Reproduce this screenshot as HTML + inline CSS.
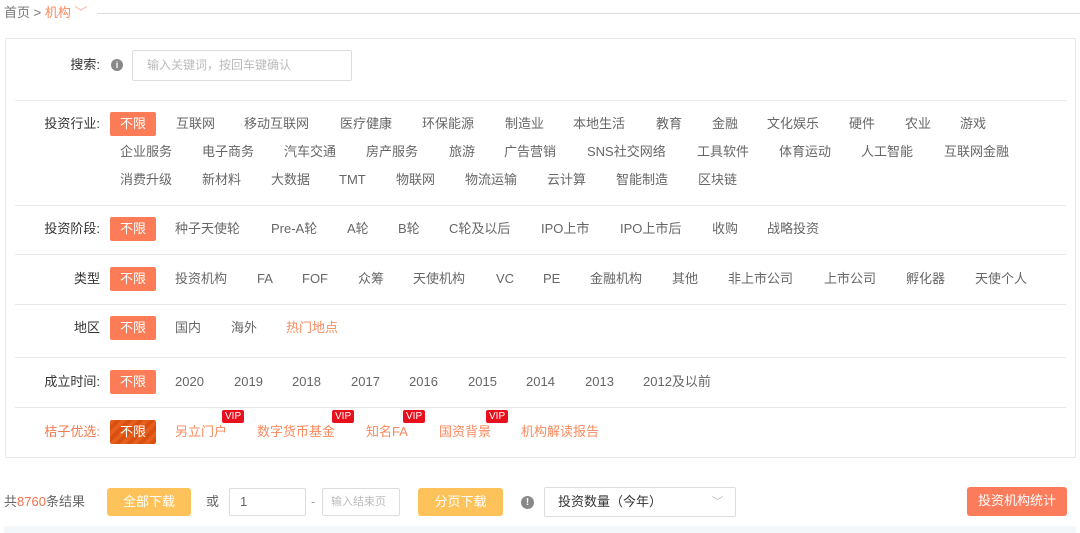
<!DOCTYPE html><html><head><meta charset="utf-8"><style>
*{margin:0;padding:0;box-sizing:border-box}
body{width:1080px;height:533px;background:#fff;font-family:"Liberation Sans","Noto Sans CJK SC",sans-serif;font-size:13px;color:#666;position:relative;overflow:hidden}
.a{position:absolute;white-space:nowrap;line-height:18px}
.panel{position:absolute;left:5px;top:38px;width:1071px;height:420px;border:1px solid #e6e6e6;border-radius:2px}
.hr{position:absolute;left:15px;width:1051px;height:1px;background:#e8e8e8}
.lab{position:absolute;right:980px;color:#333;white-space:nowrap;line-height:18px}
.tag{position:absolute;left:110px;width:46px;height:24px;background:#fb7c57;color:#fff;line-height:24px;text-align:center;border-radius:2px}
.vip{position:absolute;background:#e8101c;color:#fff;font-size:10px;line-height:13px;padding:0 3px;border-radius:2px}
.o{color:#f98a5e}
.btn{position:absolute;height:28px;line-height:28px;text-align:center;color:#fff;border-radius:3px}
.inp{position:absolute;height:28px;border:1px solid #ddd;border-radius:2px;line-height:26px;padding-left:10px}
</style></head><body>
<div class="a" style="left:4px;top:4px;color:#777">首页 &gt; <span class="o">机构</span> <span style="color:#f7b9a0">﹀</span></div>
<div style="position:absolute;left:97px;top:13px;width:983px;height:1px;background:#ddd"></div>
<div class="panel"></div>
<div class="lab" style="top:56px">搜索:</div>
<div style="position:absolute;left:111px;top:59px;width:12px;height:12px;border-radius:50%;background:#888;color:#fff;font-size:9px;line-height:12px;text-align:center;font-weight:bold">i</div>
<div class="inp" style="left:132px;top:50px;width:220px;height:31px;line-height:29px;color:#bbb;font-size:12px;padding-left:14px">输入关键词，按回车键确认</div>
<div class="hr" style="top:100px"></div>
<div class="lab" style="top:115px">投资行业:</div><div class="tag" style="top:112px">不限</div>
<div class="a" style="left:176px;top:115px">互联网</div><div class="a" style="left:244px;top:115px">移动互联网</div><div class="a" style="left:340px;top:115px">医疗健康</div><div class="a" style="left:422px;top:115px">环保能源</div><div class="a" style="left:505px;top:115px">制造业</div><div class="a" style="left:573px;top:115px">本地生活</div><div class="a" style="left:656px;top:115px">教育</div><div class="a" style="left:712px;top:115px">金融</div><div class="a" style="left:767px;top:115px">文化娱乐</div><div class="a" style="left:849px;top:115px">硬件</div><div class="a" style="left:905px;top:115px">农业</div><div class="a" style="left:960px;top:115px">游戏</div>
<div class="a" style="left:120px;top:143px">企业服务</div><div class="a" style="left:202px;top:143px">电子商务</div><div class="a" style="left:284px;top:143px">汽车交通</div><div class="a" style="left:366px;top:143px">房产服务</div><div class="a" style="left:449px;top:143px">旅游</div><div class="a" style="left:504px;top:143px">广告营销</div><div class="a" style="left:587px;top:143px">SNS社交网络</div><div class="a" style="left:697px;top:143px">工具软件</div><div class="a" style="left:779px;top:143px">体育运动</div><div class="a" style="left:861px;top:143px">人工智能</div><div class="a" style="left:944px;top:143px">互联网金融</div>
<div class="a" style="left:120px;top:171px">消费升级</div><div class="a" style="left:202px;top:171px">新材料</div><div class="a" style="left:271px;top:171px">大数据</div><div class="a" style="left:339px;top:171px">TMT</div><div class="a" style="left:396px;top:171px">物联网</div><div class="a" style="left:465px;top:171px">物流运输</div><div class="a" style="left:547px;top:171px">云计算</div><div class="a" style="left:616px;top:171px">智能制造</div><div class="a" style="left:698px;top:171px">区块链</div>
<div class="hr" style="top:205px"></div>
<div class="lab" style="top:220px">投资阶段:</div><div class="tag" style="top:217px">不限</div>
<div class="a" style="left:175px;top:220px">种子天使轮</div><div class="a" style="left:271px;top:220px">Pre-A轮</div><div class="a" style="left:347px;top:220px">A轮</div><div class="a" style="left:398px;top:220px">B轮</div><div class="a" style="left:449px;top:220px">C轮及以后</div><div class="a" style="left:541px;top:220px">IPO上市</div><div class="a" style="left:620px;top:220px">IPO上市后</div><div class="a" style="left:712px;top:220px">收购</div><div class="a" style="left:767px;top:220px">战略投资</div>
<div class="hr" style="top:254px"></div>
<div class="lab" style="top:270px">类型</div><div class="tag" style="top:267px">不限</div>
<div class="a" style="left:175px;top:270px">投资机构</div><div class="a" style="left:257px;top:270px">FA</div><div class="a" style="left:302px;top:270px">FOF</div><div class="a" style="left:358px;top:270px">众筹</div><div class="a" style="left:413px;top:270px">天使机构</div><div class="a" style="left:496px;top:270px">VC</div><div class="a" style="left:543px;top:270px">PE</div><div class="a" style="left:590px;top:270px">金融机构</div><div class="a" style="left:672px;top:270px">其他</div><div class="a" style="left:728px;top:270px">非上市公司</div><div class="a" style="left:824px;top:270px">上市公司</div><div class="a" style="left:906px;top:270px">孵化器</div><div class="a" style="left:975px;top:270px">天使个人</div>
<div class="hr" style="top:304px"></div>
<div class="lab" style="top:319px">地区</div><div class="tag" style="top:316px">不限</div>
<div class="a" style="left:175px;top:319px">国内</div><div class="a" style="left:231px;top:319px">海外</div><div class="a o" style="left:286px;top:319px">热门地点</div>
<div class="hr" style="top:357px"></div>
<div class="lab" style="top:373px">成立时间:</div><div class="tag" style="top:370px">不限</div>
<div class="a" style="left:175px;top:373px">2020</div><div class="a" style="left:234px;top:373px">2019</div><div class="a" style="left:292px;top:373px">2018</div><div class="a" style="left:351px;top:373px">2017</div><div class="a" style="left:409px;top:373px">2016</div><div class="a" style="left:468px;top:373px">2015</div><div class="a" style="left:526px;top:373px">2014</div><div class="a" style="left:585px;top:373px">2013</div><div class="a" style="left:643px;top:373px">2012及以前</div>
<div class="hr" style="top:407px"></div>
<div class="lab o" style="top:423px;color:#f07b4e">桔子优选:</div><div class="tag" style="top:420px;left:110px;width:46px;background:repeating-linear-gradient(135deg,#e85e1c 0 4px,#d94f10 4px 8px)">不限</div>
<div class="a o" style="left:175px;top:423px">另立门户</div><div class="a o" style="left:257px;top:423px">数字货币基金</div><div class="a o" style="left:366px;top:423px">知名FA</div><div class="a o" style="left:439px;top:423px">国资背景</div><div class="a o" style="left:521px;top:423px">机构解读报告</div>
<div class="vip" style="left:222px;top:410px">VIP</div><div class="vip" style="left:332px;top:410px">VIP</div><div class="vip" style="left:403px;top:410px">VIP</div><div class="vip" style="left:486px;top:410px">VIP</div>
<div class="a" style="left:4px;top:493px">共<span style="color:#f4704f">8760</span>条结果</div>
<div class="btn" style="left:107px;top:488px;width:84px;background:#fdc35a">全部下载</div>
<div class="a" style="left:206px;top:493px">或</div>
<div class="inp" style="left:229px;top:488px;width:77px;color:#666">1</div>
<div class="a" style="left:311px;top:493px;color:#aaa">-</div>
<div class="inp" style="left:322px;top:488px;width:78px;color:#bbb;font-size:11px;padding-left:8px">输入结束页</div>
<div class="btn" style="left:418px;top:488px;width:85px;background:#fdc35a">分页下载</div>
<div style="position:absolute;left:521px;top:496px;width:13px;height:13px;border-radius:50%;background:#888;color:#fff;font-size:10px;line-height:13px;text-align:center;font-weight:bold">!</div>
<div class="inp" style="left:544px;top:487px;width:192px;height:30px;line-height:28px;color:#333;padding-left:13px">投资数量（今年）<span style="position:absolute;right:12px;color:#bbb;font-size:11px">﹀</span></div>
<div class="btn" style="left:967px;top:487px;width:100px;height:29px;background:#fb7b5a">投资机构统计</div>
<div style="position:absolute;left:4px;top:526px;width:1072px;height:7px;background:#f4f7fa"></div>
</body></html>
